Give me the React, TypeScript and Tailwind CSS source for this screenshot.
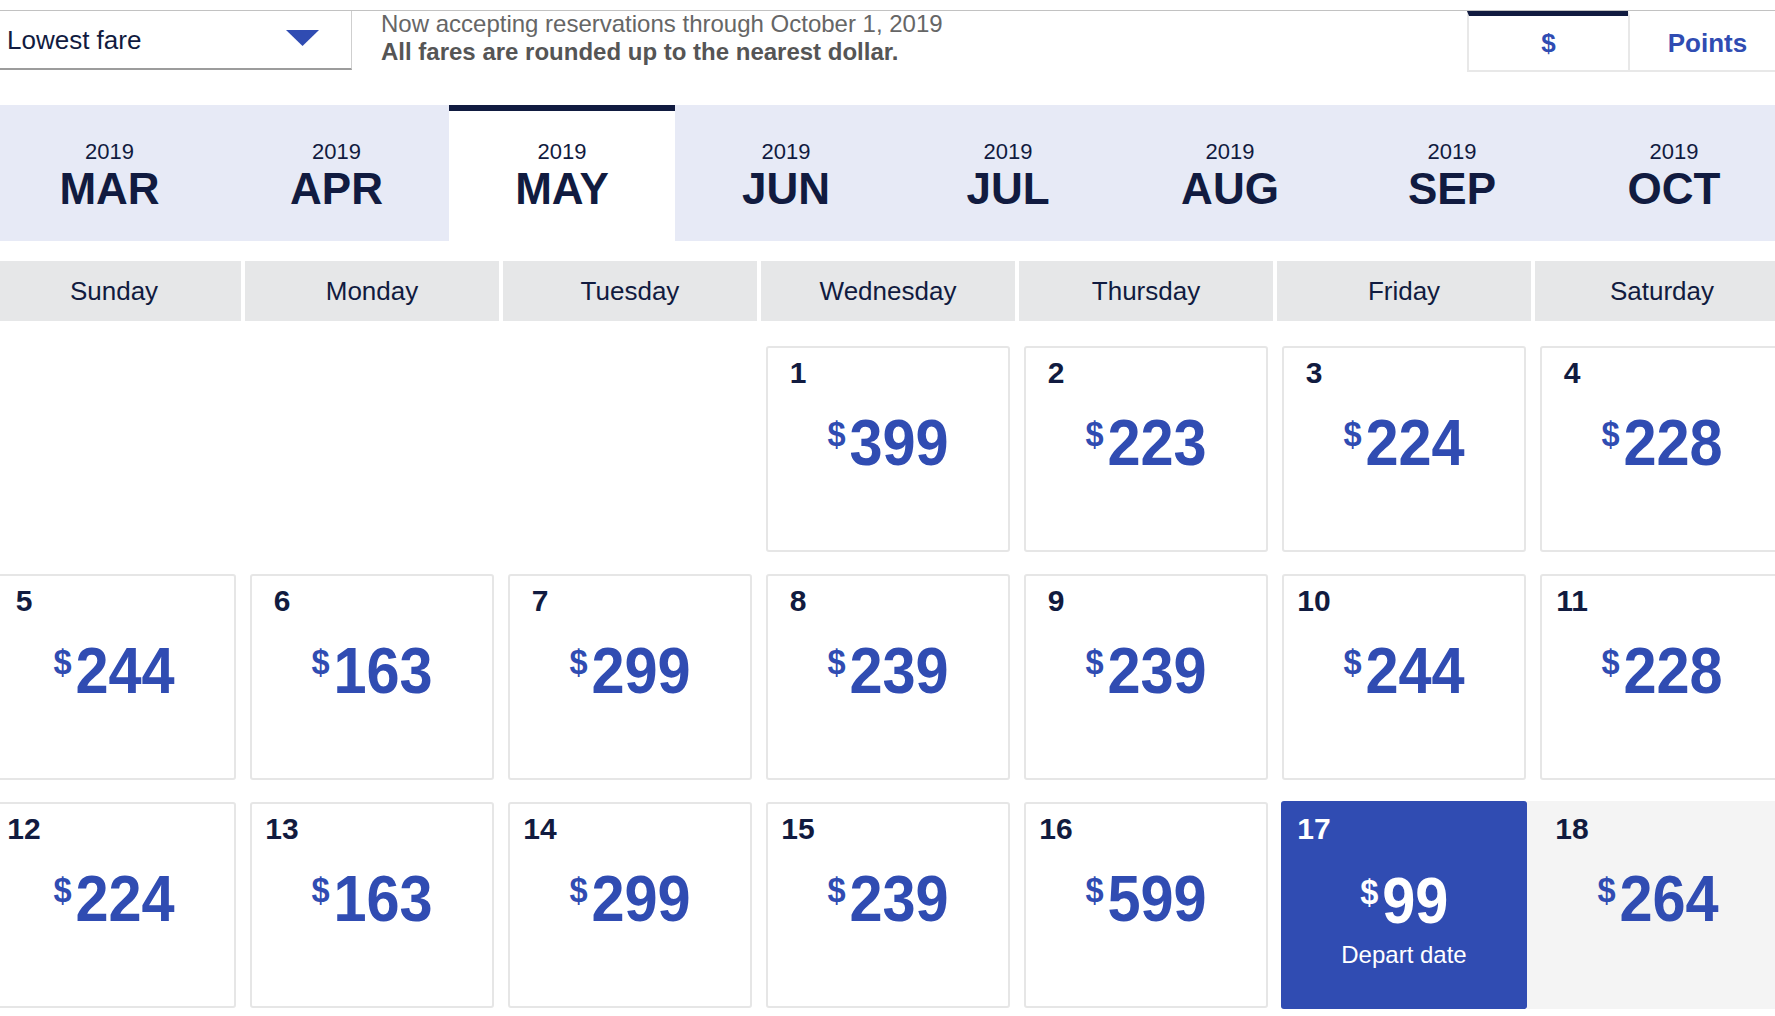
import { useState } from 'react'

type Day = { date: number; fare: number } | null

const MONTHS = ['MAR', 'APR', 'MAY', 'JUN', 'JUL', 'AUG', 'SEP', 'OCT']
const DAYS = ['Sunday', 'Monday', 'Tuesday', 'Wednesday', 'Thursday', 'Friday', 'Saturday']

const WEEKS: Day[][] = [
  [null, null, null, { date: 1, fare: 399 }, { date: 2, fare: 223 }, { date: 3, fare: 224 }, { date: 4, fare: 228 }],
  [
    { date: 5, fare: 244 },
    { date: 6, fare: 163 },
    { date: 7, fare: 299 },
    { date: 8, fare: 239 },
    { date: 9, fare: 239 },
    { date: 10, fare: 244 },
    { date: 11, fare: 228 },
  ],
  [
    { date: 12, fare: 224 },
    { date: 13, fare: 163 },
    { date: 14, fare: 299 },
    { date: 15, fare: 239 },
    { date: 16, fare: 599 },
    { date: 17, fare: 99 },
    { date: 18, fare: 264 },
  ],
]

const HOVERED = 18

// tab widths are a little uneven in the original layout
const TAB_WIDTH: Record<string, string> = {
  MAR: 'w-[229px]',
  APR: 'w-[225px]',
  MAY: 'w-[226px]',
}

function Price({ fare, light }: { fare: number; light?: boolean }) {
  return (
    <div className="flex justify-center">
      <div
        className={`inline-flex origin-center scale-x-[0.93] items-start font-bold ${
          light ? 'text-white' : 'text-[#304cb2]'
        }`}
      >
        <span className="mt-[5px] text-[35px] leading-none">$</span>
        <span className="ml-[4px] text-[64px] leading-none">{fare}</span>
      </div>
    </div>
  )
}

function DayNumber({ date, light }: { date: number; light?: boolean }) {
  return (
    <div
      className={`w-12 text-center text-[30px] font-bold leading-[34px] ${
        light ? 'text-white' : 'text-[#111b40]'
      }`}
    >
      {date}
    </div>
  )
}

function DayCell({ day, selected, onSelect }: { day: Day; selected: boolean; onSelect: () => void }) {
  if (!day) return <div className="h-[206px]" />

  if (selected) {
    return (
      <div onClick={onSelect} className="mx-[4px] -my-px h-[208px] cursor-pointer rounded-[3px] bg-[#304cb2]">
        <div className="pl-[9px] pt-[11px]">
          <DayNumber date={day.date} light />
        </div>
        <div className="mt-[23px]">
          <Price fare={day.fare} light />
        </div>
        <p className="mt-[9px] text-center text-[24px] leading-[26px] text-white">Depart date</p>
      </div>
    )
  }

  if (day.date === HOVERED) {
    return (
      <div onClick={onSelect} className="-my-px -ml-[8px] h-[208px] cursor-pointer bg-[#f4f4f4]">
        <div className="pl-[21px] pt-[11px]">
          <DayNumber date={day.date} />
        </div>
        <div className="mt-[21px]">
          <Price fare={day.fare} />
        </div>
      </div>
    )
  }

  return (
    <div
      onClick={onSelect}
      className="mx-[5px] h-[206px] cursor-pointer rounded-[3px] border-2 border-[#e6e6e6] bg-white"
    >
      <div className="pl-[6px] pt-[8px]">
        <DayNumber date={day.date} />
      </div>
      <div className="mt-[21px]">
        <Price fare={day.fare} />
      </div>
    </div>
  )
}

export default function App() {
  const [month, setMonth] = useState('MAY')
  const [currency, setCurrency] = useState<'usd' | 'points'>('usd')
  const [selected, setSelected] = useState(17)

  return (
    <div className="min-h-screen w-full overflow-hidden bg-white font-['Liberation_Sans',Arial,sans-serif]">
      {/* top bar */}
      <div className="h-[10px]" />
      <div className="flex items-start border-t border-[#c2c2c2]">
        <div className="flex h-[59px] w-[352px] shrink-0 items-center justify-between border-r border-b-2 border-r-[#cfcfcf] border-b-[#9c9c9c] pl-[7px] pr-[32px]">
          <span className="text-[26px] leading-none text-[#111b40]">Lowest fare</span>
          <svg width="33" height="16" viewBox="0 0 33 16" className="mt-[-4px]">
            <polygon points="0,0 33,0 16.5,16" fill="#304cb2" />
          </svg>
        </div>
        <div className="-mt-px ml-[29px] text-[24px] leading-[28px]">
          <p className="text-[#666666]">Now accepting reservations through October 1, 2019</p>
          <p className="font-bold text-[#555555]">All fares are rounded up to the nearest dollar.</p>
        </div>
        <div className="-mr-[10px] ml-auto flex h-[61px] text-[26px] font-bold text-[#304cb2]">
          <button
            type="button"
            onClick={() => setCurrency('usd')}
            className={`flex w-[161px] items-center justify-center border-b-2 border-l-2 border-t-[5px] border-b-[#e8e8e8] border-l-[#e8e8e8] ${
              currency === 'usd' ? 'border-t-[#111b40]' : 'border-t-transparent'
            }`}
          >
            $
          </button>
          <button
            type="button"
            onClick={() => setCurrency('points')}
            className={`flex w-[157px] items-center justify-center border-b-2 border-l-2 border-t-[5px] border-b-[#e8e8e8] border-l-[#e8e8e8] ${
              currency === 'points' ? 'border-t-[#111b40]' : 'border-t-transparent'
            }`}
          >
            Points
          </button>
        </div>
      </div>

      {/* month tabs */}
      <div className="-ml-[5px] mt-[33px] flex h-[136px] bg-[#e7eaf6]">
        {MONTHS.map((m) => {
          const active = m === month
          return (
            <button
              key={m}
              type="button"
              onClick={() => setMonth(m)}
              className={`flex shrink-0 flex-col items-center border-t-[6px] pt-[28px] text-[#111b40] ${
                TAB_WIDTH[m] ?? 'w-[222px]'
              } ${active ? 'border-t-[#111b40] bg-white' : 'border-t-transparent'}`}
            >
              <span className="text-[22px] leading-[26px]">2019</span>
              <span className="text-[44px] font-bold leading-[48px]">{m}</span>
            </button>
          )
        })}
      </div>

      {/* calendar */}
      <div className="ml-[-13px] mt-[20px] w-[1802px]">
        <div className="grid grid-cols-7 gap-x-[4px]">
          {DAYS.map((d) => (
            <div
              key={d}
              className="flex h-[60px] items-center justify-center bg-[#e6e7e8] text-[26px] text-[#111b40]"
            >
              {d}
            </div>
          ))}
        </div>
        <div className="mt-[25px] grid grid-cols-7 gap-x-[4px] gap-y-[22px]">
          {WEEKS.flat().map((day, i) => (
            <DayCell
              key={i}
              day={day}
              selected={day?.date === selected}
              onSelect={() => day && setSelected(day.date)}
            />
          ))}
        </div>
      </div>
    </div>
  )
}
